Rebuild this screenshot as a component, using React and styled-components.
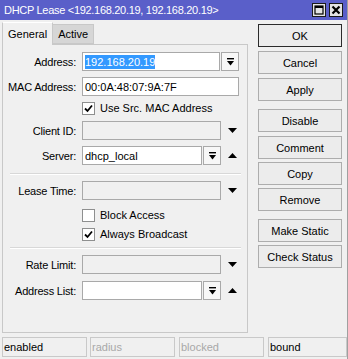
import React from 'react';
import styled, { createGlobalStyle } from 'styled-components';

const GlobalStyle = createGlobalStyle`
  html, body {
    margin: 0;
    padding: 0;
    background: #f0f0f0;
  }
  body {
    font-family: "Liberation Sans", Arial, sans-serif;
    font-size: 11px;
    color: #000;
  }
`;

const Window = styled.div`
  width: 348px;
  height: 359px;
  box-sizing: border-box;
  border-right: 1px solid #a0a0a0;
  background: #f0f0f0;
  display: flex;
  flex-direction: column;
  overflow: hidden;
`;

const TitleBar = styled.div`
  height: 20px;
  flex: none;
  background: #5a5fc9;
  color: #fff;
  display: flex;
  align-items: center;
  padding: 0 4px 0 4px;
  font-size: 11px;
  letter-spacing: -0.3px;
`;

const TitleText = styled.div`
  flex: 1;
`;

const TitleButton = styled.div`
  width: 14px;
  height: 14px;
  box-sizing: border-box;
  border: 1px solid #1a1a1a;
  background: #e4e4e4;
  margin-left: 3px;
  display: flex;
  align-items: center;
  justify-content: center;
`;

const Main = styled.div`
  height: 313px;
  display: flex;
  padding-left: 2px;
`;

const LeftSide = styled.div`
  width: 246px;
  display: flex;
  flex-direction: column;
`;

const TabStrip = styled.div`
  height: 24px;
  display: flex;
  align-items: flex-end;
`;

const Tab = styled.div`
  box-sizing: border-box;
  height: ${p => (p.$active ? 23 : 20)}px;
  padding: 0 5px;
  display: flex;
  align-items: center;
  background: ${p => (p.$active ? '#f0f0f0' : '#d6d6d6')};
  border: 1px solid #c8c8c8;
  border-bottom: ${p => (p.$active ? 'none' : '1px solid #c8c8c8')};
  border-top-color: ${p => (p.$active ? '#ffffff' : '#c8c8c8')};
  margin-bottom: ${p => (p.$active ? -1 : 0)}px;
  margin-right: -1px;
  position: relative;
  z-index: ${p => (p.$active ? 2 : 1)};
`;

const Panel = styled.div`
  flex: 1;
  box-sizing: border-box;
  border: 1px solid #c8c8c8;
  background: #f0f0f0;
  padding-top: 7px;
  display: flex;
  flex-direction: column;
`;

const Row = styled.div`
  display: flex;
  align-items: center;
  height: ${p => p.$h || 19}px;
  margin-top: ${p => p.$mt || 0}px;
`;

const Label = styled.div`
  width: 79px;
  flex: none;
  box-sizing: border-box;
  padding-right: 6px;
  text-align: right;
  letter-spacing: -0.2px;
`;

const Field = styled.div`
  width: ${p => p.$w}px;
  height: 19px;
  box-sizing: border-box;
  border: 1px solid #a9a9a9;
  background: ${p => (p.$disabled ? '#f0f0f0' : '#ffffff')};
  display: flex;
  align-items: center;
  padding-left: 2px;
  flex: none;
  overflow: hidden;
  white-space: nowrap;
`;

const Selected = styled.span`
  background: #3399ff;
  color: #fff;
  line-height: 14px;
`;

const DropButton = styled.div`
  width: 18px;
  height: 19px;
  box-sizing: border-box;
  border: 1px solid #a9a9a9;
  background: #f7f7f7;
  margin-left: 1px;
  display: flex;
  align-items: center;
  justify-content: center;
  flex: none;
`;

const Arrow = styled.div`
  margin-left: 7px;
  width: 9px;
  height: 5px;
  display: flex;
`;

const CheckRow = styled.div`
  display: flex;
  align-items: center;
  height: 14px;
  margin-top: ${p => p.$mt || 0}px;
  padding-left: 79px;
`;

const CheckBox = styled.div`
  width: 13px;
  height: 13px;
  box-sizing: border-box;
  border: 1px solid #8e8f8f;
  background: #fff;
  display: flex;
  align-items: center;
  justify-content: center;
  margin-right: 5px;
`;

const Separator = styled.div`
  height: 1px;
  margin: ${p => p.$mt}px 6px 0 7px;
  background: #d8d8d8;
  border-bottom: 1px solid #ffffff;
`;

const ButtonColumn = styled.div`
  margin-left: 10px;
  width: 84px;
  display: flex;
  flex-direction: column;
  padding-top: 4px;
`;

const Button = styled.div`
  height: 23px;
  box-sizing: border-box;
  border: 1px solid ${p => (p.$default ? '#2b2b2b' : '#adadad')};
  background: #ececec;
  display: flex;
  align-items: center;
  justify-content: center;
  margin-top: ${p => p.$mt || 0}px;
  font-size: 11px;
`;

const StatusBar = styled.div`
  display: flex;
  margin-top: 4px;
  padding-left: 2px;
`;

const StatusBox = styled.div`
  width: ${p => p.$w}px;
  height: 20px;
  box-sizing: border-box;
  border: 1px solid #c9c9c9;
  margin-right: ${p => p.$gap || 0}px;
  color: ${p => (p.$dim ? '#a8a8a8' : '#000')};
  display: flex;
  align-items: center;
  padding-left: 1px;
`;

const DropIcon = () => (
  <svg width="9" height="8" viewBox="0 0 9 8">
    <rect x="1" y="0" width="7" height="1.4" fill="#000" />
    <polygon points="1,3 8,3 4.5,7.5" fill="#000" />
  </svg>
);

const Down = () => (
  <Arrow>
    <svg width="9" height="5" viewBox="0 0 9 5">
      <polygon points="0,0 9,0 4.5,5" fill="#000" />
    </svg>
  </Arrow>
);

const Up = () => (
  <Arrow>
    <svg width="9" height="5" viewBox="0 0 9 5">
      <polygon points="0,5 9,5 4.5,0" fill="#000" />
    </svg>
  </Arrow>
);

const Check = ({ checked }) => (
  <CheckBox>
    {checked && (
      <svg width="9" height="9" viewBox="0 0 9 9">
        <polyline points="1,4.5 3.5,7 8,1.5" fill="none" stroke="#000" strokeWidth="1.8" />
      </svg>
    )}
  </CheckBox>
);

export default function App() {
  return (
    <Window>
      <GlobalStyle />
      <TitleBar>
        <TitleText>DHCP Lease &lt;192.168.20.19, 192.168.20.19&gt;</TitleText>
        <TitleButton>
          <svg width="10" height="10" viewBox="0 0 10 10">
            <rect x="1" y="1" width="8" height="8" fill="none" stroke="#000" strokeWidth="1.2" />
            <rect x="1" y="1" width="8" height="2" fill="#000" />
          </svg>
        </TitleButton>
        <TitleButton>
          <svg width="10" height="10" viewBox="0 0 10 10">
            <path d="M1.5 1.5 L8.5 8.5 M8.5 1.5 L1.5 8.5" stroke="#000" strokeWidth="2.2" />
          </svg>
        </TitleButton>
      </TitleBar>

      <Main>
        <LeftSide>
          <TabStrip>
            <Tab $active>General</Tab>
            <Tab>Active</Tab>
          </TabStrip>
          <Panel>
            <Row>
              <Label>Address:</Label>
              <Field $w={138}><Selected>192.168.20.19</Selected></Field>
              <DropButton><DropIcon /></DropButton>
            </Row>
            <Row $mt={6}>
              <Label>MAC Address:</Label>
              <Field $w={157}>00:0A:48:07:9A:7F</Field>
            </Row>
            <CheckRow $mt={5}>
              <Check checked />
              Use Src. MAC Address
            </CheckRow>
            <Row $mt={6}>
              <Label>Client ID:</Label>
              <Field $w={139} $disabled />
              <Down />
            </Row>
            <Row $mt={6}>
              <Label>Server:</Label>
              <Field $w={120}>dhcp_local</Field>
              <DropButton><DropIcon /></DropButton>
              <Up />
            </Row>
            <Separator $mt={8} />
            <Row $mt={6}>
              <Label>Lease Time:</Label>
              <Field $w={139} $disabled />
              <Down />
            </Row>
            <CheckRow $mt={8}>
              <Check />
              Block Access
            </CheckRow>
            <CheckRow $mt={5}>
              <Check checked />
              Always Broadcast
            </CheckRow>
            <Separator $mt={6} />
            <Row $mt={6}>
              <Label>Rate Limit:</Label>
              <Field $w={139} $disabled />
              <Down />
            </Row>
            <Row $mt={7}>
              <Label>Address List:</Label>
              <Field $w={120} />
              <DropButton><DropIcon /></DropButton>
              <Up />
            </Row>
          </Panel>
        </LeftSide>

        <ButtonColumn>
          <Button $default>OK</Button>
          <Button $mt={4}>Cancel</Button>
          <Button $mt={4}>Apply</Button>
          <Button $mt={8}>Disable</Button>
          <Button $mt={4}>Comment</Button>
          <Button $mt={3}>Copy</Button>
          <Button $mt={3}>Remove</Button>
          <Button $mt={8}>Make Static</Button>
          <Button $mt={3}>Check Status</Button>
        </ButtonColumn>
      </Main>

      <StatusBar>
        <StatusBox $w={85} $gap={3}>enabled</StatusBox>
        <StatusBox $w={85} $gap={4} $dim>radius</StatusBox>
        <StatusBox $w={85} $gap={4} $dim>blocked</StatusBox>
        <StatusBox $w={79}>bound</StatusBox>
      </StatusBar>
    </Window>
  );
}
